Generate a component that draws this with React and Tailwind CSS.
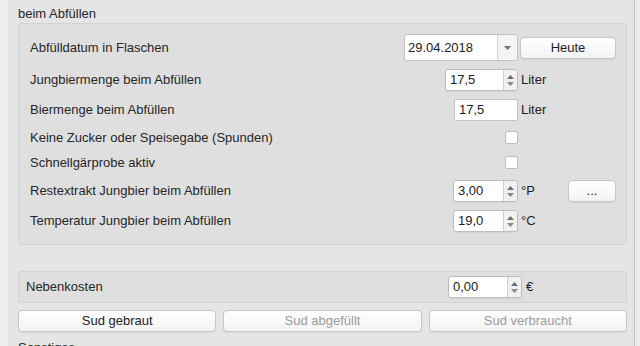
import React from 'react';

const font = { fontFamily: '"Liberation Sans", Arial, sans-serif' };

function SpinBox({ value, width }) {
  return (
    <div className={`flex h-[22px] shrink-0 ${width} rounded-[3px] border border-[#bdbdbd] bg-white shadow-[0_1px_0_rgba(0,0,0,0.04)]`}>
      <div className="flex flex-1 items-center pl-[4px] text-[13px] text-[#222]">{value}</div>
      <div className="flex w-[14px] flex-col items-center justify-center gap-[3px] rounded-r-[3px] border-l border-[#d0d0d0] bg-[#f1f1f1]">
        <svg width="7" height="4" viewBox="0 0 7 4"><path d="M0 4 L3.5 0 L7 4 Z" fill="#6e6e6e" /></svg>
        <svg width="7" height="4" viewBox="0 0 7 4"><path d="M0 0 L3.5 4 L7 0 Z" fill="#8a8a8a" /></svg>
      </div>
    </div>
  );
}

function LineEdit({ value, width }) {
  return (
    <div className={`flex h-[22px] ${width} items-center rounded-[2px] border border-[#c4c4c4] bg-white pl-[4px] text-[13px] text-[#222]`}>
      {value}
    </div>
  );
}

function CheckBox() {
  return <div className="h-[13px] w-[13px] rounded-[2px] border border-[#bcbcbc] bg-white" />;
}

function Button({ children, className = '', disabled = false }) {
  return (
    <div
      className={`flex items-center justify-center rounded-[4px] border border-[#c6c6c6] bg-gradient-to-b from-white to-[#f3f3f3] text-[13px] shadow-[0_1px_1px_rgba(0,0,0,0.06)] ${disabled ? 'text-[#9c9c9c]' : 'text-[#222]'} ${className}`}
    >
      {children}
    </div>
  );
}

function Row({ label, className = '', control, extra }) {
  return (
    <div className={`flex shrink-0 items-center ${className}`}>
      <div className="flex-1 text-[13px] text-[#262626]">{label}</div>
      <div className="flex w-[114px] justify-end">{control}</div>
      <div className="flex w-[98px] items-center">{extra}</div>
    </div>
  );
}

function Unit({ children }) {
  return <span className="ml-[3px] text-[13px] text-[#222]">{children}</span>;
}

export default function App() {
  return (
    <div className="flex h-[346px] w-[640px] overflow-hidden bg-[#ececec]" style={font}>
      {/* left strip */}
      <div className="w-[8px] shrink-0 bg-[#ededed]" />

      {/* main pane */}
      <div className="flex w-[627px] shrink-0 flex-col overflow-hidden border-r border-[#c2c2c2] bg-[#e5e5e5] pl-[10px] pr-[7px] pt-[6px]">
        <div className="h-[16px] shrink-0 text-[13px] leading-[16px] text-[#262626]">beim Abfüllen</div>

        {/* group box */}
        <div className="mt-[1px] flex h-[222px] shrink-0 flex-col rounded-[3px] border border-[#d2d2d2] bg-[#dfdfdf] pl-[11px] pr-[10px] pt-[10px]">
          <Row
            label="Abfülldatum in Flaschen"
            className="h-[27px]"
            control={
              <div className="flex h-[27px] w-[114px] rounded-[3px] border border-[#c2c2c2] bg-white">
                <div className="flex flex-1 items-center pl-[3px] text-[13px] text-[#222]">29.04.2018</div>
                <div className="flex w-[20px] items-center justify-center rounded-r-[3px] border-l border-[#d6d6d6] bg-[#f4f4f4]">
                  <svg width="7" height="4" viewBox="0 0 7 4"><path d="M0 0 L3.5 4 L7 0 Z" fill="#707070" /></svg>
                </div>
              </div>
            }
            extra={<Button className="ml-[2px] h-[22px] w-[96px]">Heute</Button>}
          />
          <Row
            label="Jungbiermenge beim Abfüllen"
            className="mt-[8px] h-[22px]"
            control={<SpinBox value="17,5" width="w-[73px]" />}
            extra={<Unit>Liter</Unit>}
          />
          <Row
            label="Biermenge beim Abfüllen"
            className="mt-[8px] h-[22px]"
            control={<LineEdit value="17,5" width="w-[64px]" />}
            extra={<Unit>Liter</Unit>}
          />
          <Row
            label="Keine Zucker oder Speisegabe (Spunden)"
            className="mt-[10px] h-[13px]"
            control={<CheckBox />}
          />
          <Row
            label="Schnellgärprobe aktiv"
            className="mt-[12px] h-[13px]"
            control={<CheckBox />}
          />
          <Row
            label="Restextrakt Jungbier beim Abfüllen"
            className="mt-[11px] h-[22px]"
            control={<SpinBox value="3,00" width="w-[65px]" />}
            extra={
              <>
                <Unit>°P</Unit>
                <div className="flex-1" />
                <Button className="h-[22px] w-[48px]">...</Button>
              </>
            }
          />
          <Row
            label="Temperatur Jungbier beim Abfüllen"
            className="mt-[8px] h-[22px]"
            control={<SpinBox value="19,0" width="w-[65px]" />}
            extra={<Unit>°C</Unit>}
          />
        </div>

        {/* Nebenkosten */}
        <div className="mt-[26px] flex h-[32px] shrink-0 items-center rounded-[3px] border border-[#d2d2d2] bg-[#dfdfdf] pl-[7px]">
          <div className="flex-1 text-[13px] text-[#262626]">Nebenkosten</div>
          <SpinBox value="0,00" width="w-[74px]" />
          <span className="ml-[4px] w-[100px] text-[13px] text-[#222]">€</span>
        </div>

        {/* actions */}
        <div className="mt-[7px] flex shrink-0 gap-[7px]">
          <Button className="h-[22px] flex-1">Sud gebraut</Button>
          <Button className="h-[22px] flex-1" disabled>Sud abgefüllt</Button>
          <Button className="h-[22px] flex-1" disabled>Sud verbraucht</Button>
        </div>

        <div className="mt-[6px] shrink-0 text-[13px] text-[#262626]">Sonstiges</div>
      </div>

      {/* right strip */}
      <div className="flex-1 bg-[#ececec]" />
    </div>
  );
}
